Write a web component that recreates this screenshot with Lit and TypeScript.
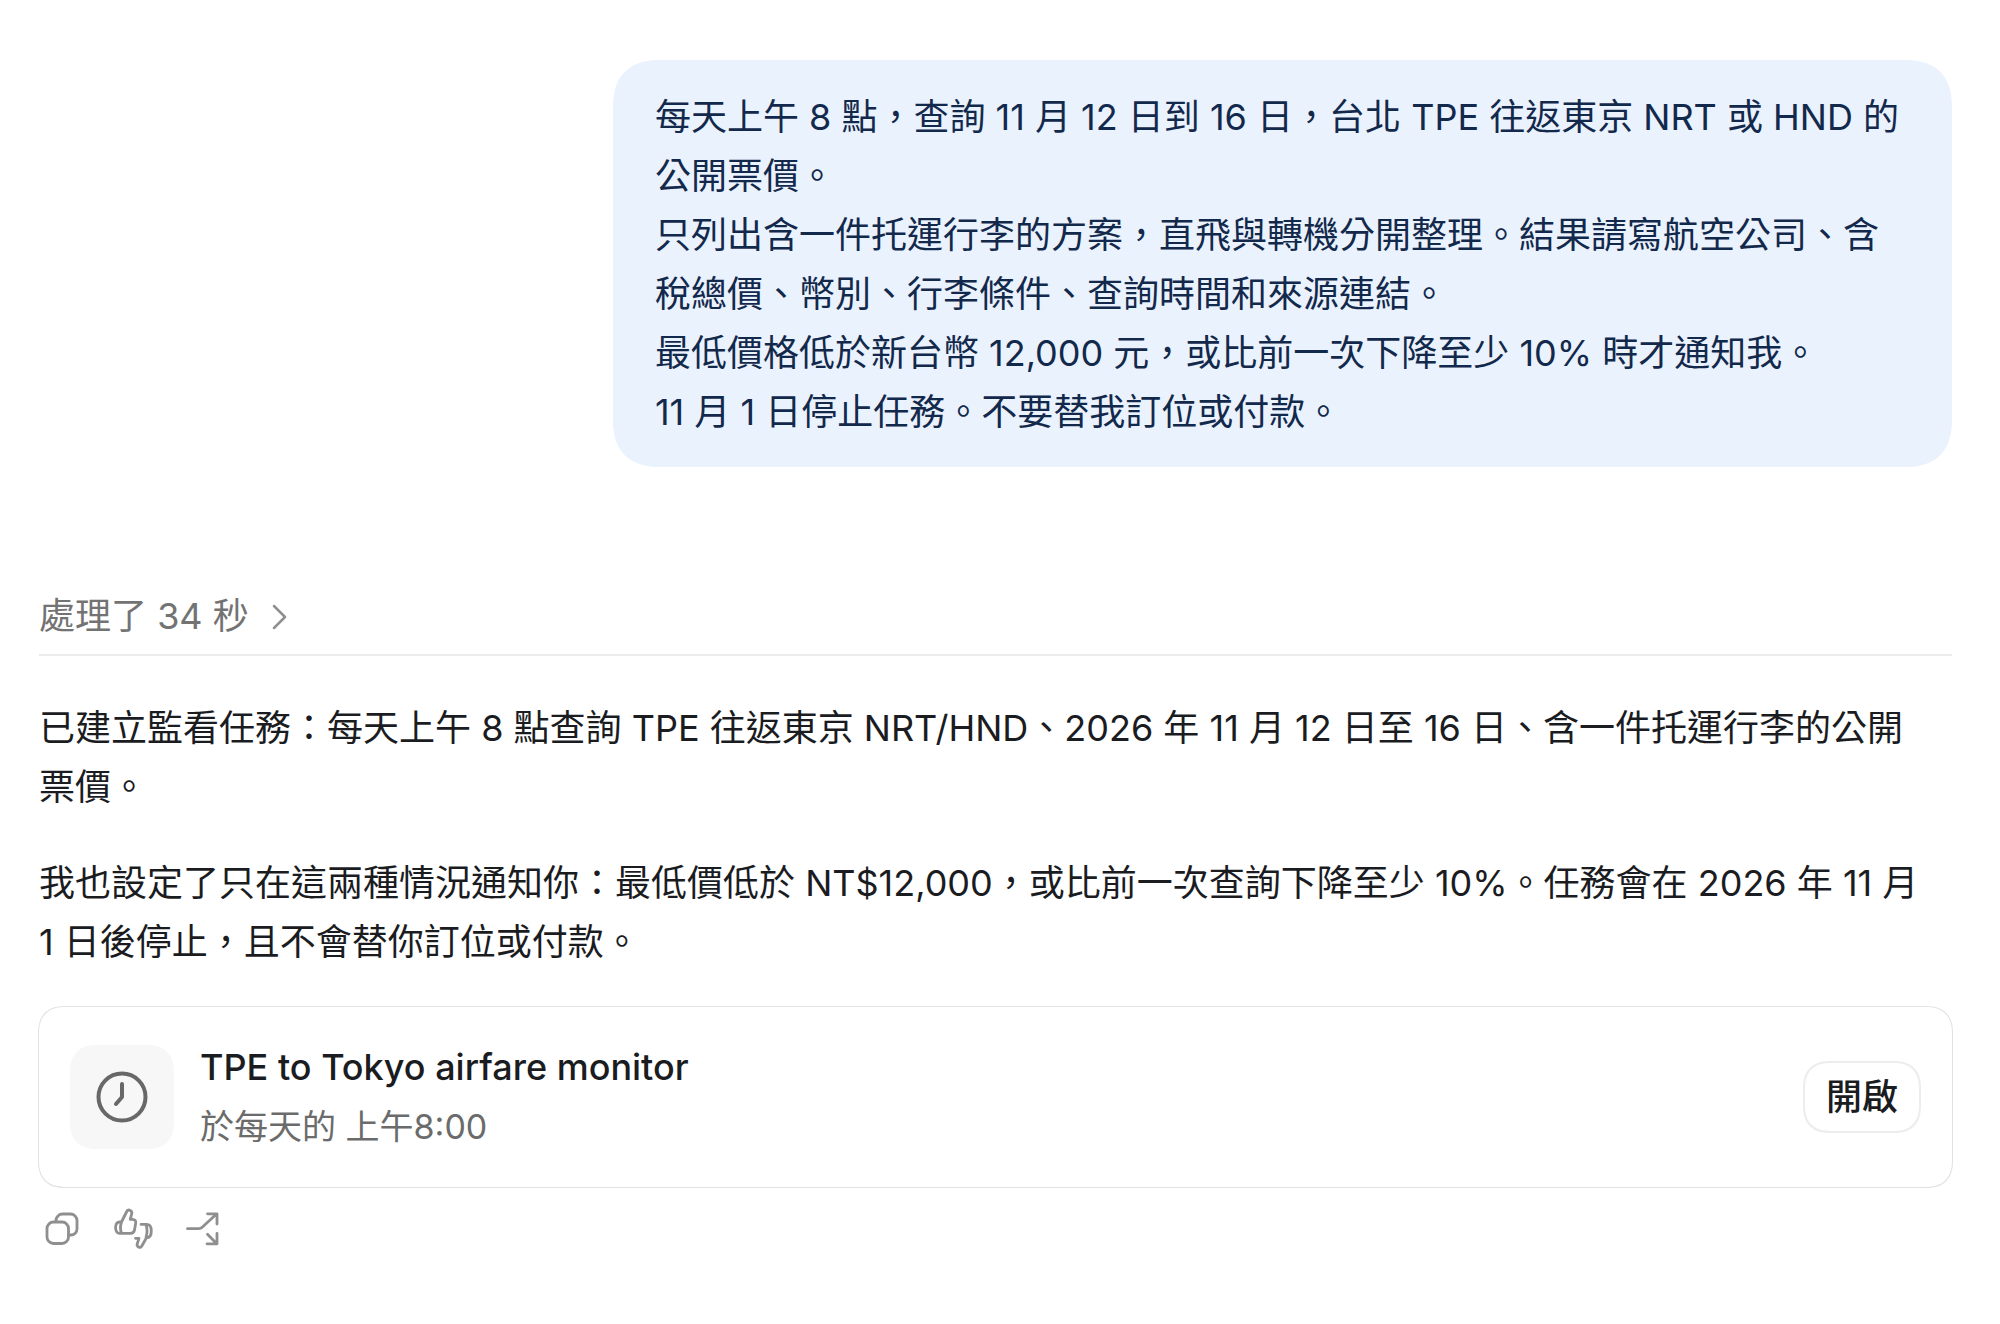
import { LitElement, html, css } from "lit";
import { customElement } from "lit/decorators.js";

@customElement("app-root")
export class AppRoot extends LitElement {
  static styles = css`
    :host {
      display: block;
      min-height: 100vh;
      box-sizing: border-box;
      padding: 60px 48px 60px 39px;
      background: #fff;
      color: #1a1c1f;
      font-family: Inter, "Noto Sans CJK TC", sans-serif;
      font-size: 36px;
      line-height: 59px;
    }
    p {
      margin: 0;
    }
    button {
      font: inherit;
      color: inherit;
      background: none;
      border: 0;
      padding: 0;
      cursor: pointer;
    }
    svg {
      display: block;
      fill: none;
      stroke: currentColor;
      stroke-linecap: round;
      stroke-linejoin: round;
    }
    .conversation {
      display: flex;
      flex-direction: column;
    }
    .bubble {
      align-self: flex-end;
      width: 70%;
      box-sizing: border-box;
      padding: 28px 40px 25px 42px;
      border-radius: 48px;
      corner-shape: superellipse(1.3);
      background: #eaf2fe;
      color: #13294b;
    }
    .status {
      display: flex;
      align-items: center;
      gap: 22px;
      margin-top: 120px;
      padding-bottom: 8px;
      border-bottom: 2px solid #ececec;
      color: #737373;
      text-align: left;
    }
    .chevron {
      color: #8f8f8f;
    }
    .reply {
      display: flex;
      flex-direction: column;
      gap: 37px;
      margin-top: 43px;
      padding-right: 24px;
    }
    .card {
      display: flex;
      align-items: center;
      gap: 26px;
      margin: 34px -1px 0;
      padding: 31px;
      border: 1px solid #e2e2e2;
      border-radius: 28px;
      corner-shape: superellipse(1.3);
    }
    .tile {
      display: grid;
      place-items: center;
      width: 104px;
      height: 104px;
      border-radius: 28px;
      corner-shape: superellipse(1.3);
      background: #f7f7f7;
      color: #686868;
    }
    .details {
      flex: 1;
    }
    .title {
      font-weight: 500;
    }
    .when {
      color: #6b6b6b;
      font-size: 34px;
    }
    .open {
      padding: 5px 21px 4px;
      border: 2px solid #ededed;
      border-radius: 28px;
      corner-shape: superellipse(1.3);
      font-weight: 500;
    }
    .actions {
      display: flex;
      gap: 20px;
      margin-top: 16px;
      padding-left: 1px;
      color: #8f8f8f;
    }
  `;

  render() {
    return html`
      <main class="conversation">
        <section class="bubble">
          <p>每天上午 8 點，查詢 11 月 12 日到 16 日，台北 TPE 往返東京 NRT 或 HND 的公開票價。</p>
          <p>只列出含一件托運行李的方案，直飛與轉機分開整理。結果請寫航空公司、含稅總價、幣別、行李條件、查詢時間和來源連結。</p>
          <p>最低價格低於新台幣 12,000 元，或比前一次下降至少 10% 時才通知我。</p>
          <p>11 月 1 日停止任務。不要替我訂位或付款。</p>
        </section>
        <button class="status">
          <span>處理了 34 秒</span>
          <svg class="chevron" width="16" height="28" viewBox="0 0 16 28" stroke-width="2.5">
            <path d="M3 3 14 14 3 25" />
          </svg>
        </button>
        <section class="reply">
          <p>已建立監看任務：每天上午 8 點查詢 TPE 往返東京 NRT/HND、2026 年 11 月 12 日至 16 日、含一件托運行李的公開票價。</p>
          <p>我也設定了只在這兩種情況通知你：最低價低於 NT$12,000，或比前一次查詢下降至少 10%。任務會在 2026 年 11 月 1 日後停止，且不會替你訂位或付款。</p>
        </section>
        <article class="card">
          <div class="tile">
            <svg width="52" height="52" viewBox="0 0 52 52" stroke-width="4">
              <circle cx="26" cy="26" r="23.5" />
              <path d="M26 13V26L20 33" />
            </svg>
          </div>
          <div class="details">
            <p class="title">TPE to Tokyo airfare monitor</p>
            <p class="when">於每天的 上午8:00</p>
          </div>
          <button class="open">開啟</button>
        </article>
        <footer class="actions">
          <button aria-label="複製">
            <svg width="50" height="48" viewBox="0 0 50 48" stroke-width="2.8">
              <rect x="7" y="18" width="21.500" height="21.500" rx="6.500" />
              <path d="M16 17.500V16.500a6.500 6.500 0 0 1 6.500-6.500H30.500a6.500 6.500 0 0 1 6.500 6.500V25a6 6 0 0 1-6 6H29" />
            </svg>
          </button>
          <button aria-label="評分">
            <svg width="50" height="48" viewBox="2 0 50 48" stroke-width="2.8">
              <path d="M13.500 18 18.500 8C19.300 6 20.300 5.800 21.500 6.200 23.500 6.900 24.200 8.200 23.700 10L22.200 15.300H24.500C27 15.300 28 17 27.700 19L26.600 25.500C26.200 28 24.800 29.300 22.500 29.300H11.500C9 29.300 7.800 27.500 7.500 23.500 7.800 19.500 9 18 11.500 18H13.500C12.300 21.500 12.300 26 13.500 29.300" />
              <path d="M33 20.300H38.500C41.800 20.300 43.300 22.500 43.300 27 43.300 31.500 41.800 33.800 38.500 33.800L33.800 42C33 43.500 31.800 43.800 30.500 43 29.200 42.200 28.800 41.200 29.200 40L31 34.300H27.500M38 20.500C39.300 24.500 39.300 29.500 38 33.500" />
            </svg>
          </button>
          <button aria-label="分享">
            <svg width="50" height="48" viewBox="0 0 50 48" stroke-width="2.8">
              <path d="M7.500 24.700H18.500C20.500 24.700 21.300 24.300 22.500 23L36.500 10M27.500 9.800H37V20M27.500 30.300 36.500 39.500M37 29.500V39.800H27" />
            </svg>
          </button>
        </footer>
      </main>
    `;
  }
}
